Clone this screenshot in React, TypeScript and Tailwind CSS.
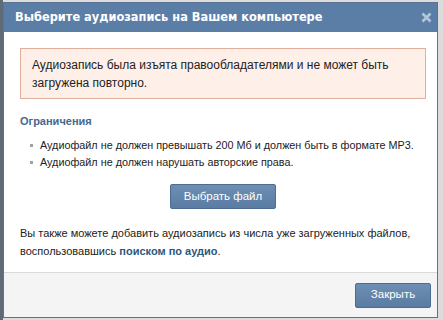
export default function App() {
  const body = { fontFamily: '"Liberation Sans", Arial, sans-serif' };
  const title = { fontFamily: '"DejaVu Sans", Tahoma, sans-serif' };
  return (
    <div className="flex h-[320px] w-[443px] overflow-hidden bg-[#dcdcdc]" style={body}>
      <div className="w-[3px] shrink-0 bg-[#5f6b77]" />
      <div className="mt-[2px] flex h-[316px] w-[435px] shrink-0 flex-col border border-[#5a7394] bg-white">
        <div className="flex h-[29px] shrink-0 items-center justify-between bg-[#5b7ea6] pl-[11px] pr-[5px]">
          <span className="text-[11.4px] font-bold text-white" style={title}>
            Выберите аудиозапись на Вашем компьютере
          </span>
          <svg width="11" height="11" viewBox="0 0 11 11">
            <path d="M1.5 1.5 L9.5 9.5 M9.5 1.5 L1.5 9.5" stroke="#b4c6da" strokeWidth="2.6" />
          </svg>
        </div>
        <div className="flex-1 pl-[16px] pr-[11px] pt-[16px] text-[10.8px] text-[#222]">
          <div className="border border-[#e2ae9c] bg-[#ffefe9] px-[11px] pb-[6px] pt-[7px] text-[12px] leading-[18px]">
            Аудиозапись была изъята правообладателями и не может быть загружена повторно.
          </div>
          <div className="mt-[15px] text-[11px] font-bold leading-[14px] text-[#45688e]">Ограничения</div>
          <ul className="mt-[9px] leading-[17px]">
            <li className="flex items-center">
              <span className="ml-[10px] mr-[7px] inline-block h-[3px] w-[3px] bg-[#a0a0a0]" />
              Аудиофайл не должен превышать 200 Мб и должен быть в формате MP3.
            </li>
            <li className="flex items-center">
              <span className="ml-[10px] mr-[7px] inline-block h-[3px] w-[3px] bg-[#a0a0a0]" />
              Аудиофайл не должен нарушать авторские права.
            </li>
          </ul>
          <div className="mt-[13px] flex justify-center">
            <button className="h-[25px] w-[106px] rounded-[2px] border border-[#4c6d92] bg-gradient-to-b from-[#6d8fb3] to-[#5a7ca3] text-[11.5px] text-white">
              Выбрать файл
            </button>
          </div>
          <p className="mt-[15px] text-[11px] leading-[18px]">
            Вы также можете добавить аудиозапись из числа уже загруженных файлов, воспользовавшись{" "}
            <span className="font-bold text-[#2b587a]">поиском по аудио</span>.
          </p>
        </div>
        <div className="flex h-[45px] shrink-0 items-center justify-end border-t border-[#dadada] bg-[#f4f4f4] pr-[6px]">
          <button className="h-[25px] w-[76px] rounded-[2px] border border-[#4c6d92] bg-gradient-to-b from-[#6d8fb3] to-[#5a7ca3] text-[11.5px] text-white">
            Закрыть
          </button>
        </div>
      </div>
    </div>
  );
}
